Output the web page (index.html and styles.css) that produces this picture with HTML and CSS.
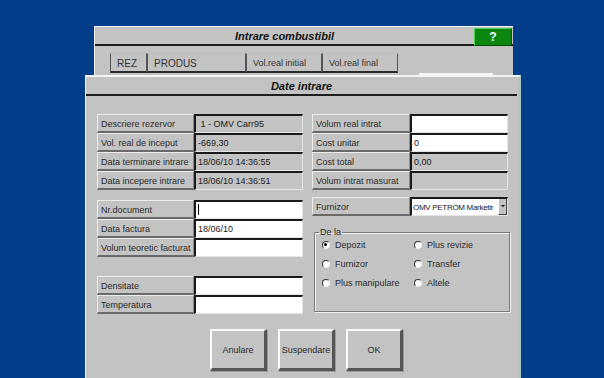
FILE: index.html
```html
<!DOCTYPE html>
<html lang="ro">
<head>
<meta charset="UTF-8">
<meta name="viewport" content="width=device-width, initial-scale=1.0">
<title>Date intrare</title>
<link rel="stylesheet" href="styles.css">
</head>
<body>
<div class="window main">
  <div class="titlebar">
    <span class="title">Intrare combustibil</span>
    <span class="help">?</span>
  </div>
  <div class="grid-head">
    <div class="hcell rez">REZ</div>
    <div class="hcell prod">PRODUS</div>
    <div class="hcell vol">Vol.real initial</div>
    <div class="hcell vol">Vol.real final</div>
  </div>
  <div class="strip"></div>
</div>

<div class="window dialog">
  <div class="titlebar">
    <span class="title">Date intrare</span>
  </div>
  <div class="content">
    <div class="col left">
      <div class="fields">
        <div class="row"><div class="label">Descriere rezervor</div><div class="value ro">&nbsp;1 - OMV Carr95</div></div>
        <div class="row"><div class="label">Vol. real de inceput</div><div class="value ro">-669,30</div></div>
        <div class="row"><div class="label">Data terminare intrare</div><div class="value ro">18/06/10 14:36:55</div></div>
        <div class="row"><div class="label">Data incepere intrare</div><div class="value ro">18/06/10 14:36:51</div></div>
      </div>
      <div class="fields doc">
        <div class="row"><div class="label">Nr.document</div><div class="value"><span class="caret"></span></div></div>
        <div class="row"><div class="label">Data factura</div><div class="value">18/06/10</div></div>
        <div class="row"><div class="label">Volum teoretic facturat</div><div class="value"></div></div>
      </div>
      <div class="fields dens">
        <div class="row"><div class="label">Densitate</div><div class="value"></div></div>
        <div class="row"><div class="label">Temperatura</div><div class="value"></div></div>
      </div>
    </div>

    <div class="col right">
      <div class="fields">
        <div class="row"><div class="label">Volum real intrat</div><div class="value"></div></div>
        <div class="row"><div class="label">Cost unitar</div><div class="value">0</div></div>
        <div class="row"><div class="label">Cost total</div><div class="value ro">0,00</div></div>
        <div class="row"><div class="label">Volum intrat masurat</div><div class="value ro"></div></div>
      </div>
      <div class="fields supplier">
        <div class="row"><div class="label">Furnizor</div>
          <div class="value select"><span class="sel-text">OMV PETROM Marketir</span><span class="arrow"></span></div>
        </div>
      </div>
      <fieldset class="group">
        <legend>De la</legend>
        <div class="radios">
          <label class="radio checked"><span class="dot"></span>Depozit</label>
          <label class="radio"><span class="dot"></span>Plus revizie</label>
          <label class="radio"><span class="dot"></span>Furnizor</label>
          <label class="radio"><span class="dot"></span>Transfer</label>
          <label class="radio"><span class="dot"></span>Plus manipulare</label>
          <label class="radio"><span class="dot"></span>Altele</label>
        </div>
      </fieldset>
    </div>
  </div>
  <div class="buttons">
    <div class="btn">Anulare</div>
    <div class="btn">Suspendare</div>
    <div class="btn">OK</div>
  </div>
</div>
</body>
</html>
```

FILE: styles.css
```css
html, body {
  margin: 0;
  height: 100%;
}
body {
  background-color: #013d88;
  font-family: "Liberation Sans", Arial, sans-serif;
  font-size: 9px;
  color: #2a2a2a;
  overflow: hidden;
  position: relative;
}
* {
  box-sizing: border-box;
}

/* windows on the desktop */
.window {
  position: absolute;
  background-color: #c3c3c3;
}
.main {
  left: 94px;
  top: 26px;
  width: 419px;
  height: 120px;
  border-top: 1px solid #f2f2f2;
  border-left: 1px solid #f2f2f2;
}
.dialog {
  left: 85px;
  top: 75px;
  width: 436px;
  height: 310px;
  border-top: 2px solid #f4f4f4;
  border-left: 1px solid #f4f4f4;
  border-right: 2px solid #a9c7b8;
}

.titlebar {
  height: 19px;
  border-bottom: 2px solid #1e1e1e;
  display: flex;
  align-items: center;
  justify-content: center;
  position: relative;
}
.main .titlebar {
  padding-right: 39px;
}
.dialog .titlebar {
  margin-right: 2px;
}
.title {
  font-size: 11px;
  font-weight: bold;
  font-style: italic;
  color: #111;
}
.help {
  position: absolute;
  right: 1px;
  top: 1px;
  width: 38px;
  height: 18px;
  background-color: #0b870f;
  border-top: 1px solid #4fcf55;
  border-left: 1px solid #4fcf55;
  border-right: 1px solid #064d09;
  border-bottom: 1px solid #064d09;
  color: #fff;
  font-size: 12px;
  font-weight: bold;
  display: flex;
  align-items: center;
  justify-content: center;
}

.grid-head {
  display: flex;
  margin: 7px 0 0 15px;
}
.hcell {
  height: 20px;
  border-left: 1px solid #555;
  border-right: 1px solid #555;
  border-top: 1px solid #bdbdbd;
  border-bottom: 2px solid #2a2a2a;
  padding: 4px 0 0 6px;
  font-size: 10px;
  color: #333;
}
.rez { width: 37px; }
.prod { width: 99px; }
.vol { width: 76px; font-size: 9px; }
.strip {
  position: absolute;
  left: 324px;
  top: 46px;
  width: 74px;
  height: 3px;
  background-color: #f4f4f4;
}

/* dialog content */
.content {
  display: flex;
  gap: 9px;
  padding: 18px 0 0 11px;
}
.col {
  display: flex;
  flex-direction: column;
}
.left { width: 206px; }
.right { width: 196px; }

.row {
  display: grid;
  grid-template-columns: 97px 1fr;
  height: 19px;
}
.right .row {
  grid-template-columns: 98px 1fr;
}
.label {
  background-color: #c3c3c3;
  border-top: 1px solid #ececec;
  border-left: 1px solid #ececec;
  border-bottom: 2px solid #6a6a6a;
  border-right: 1px solid #8a8a8a;
  padding: 4px 0 0 3px;
  white-space: nowrap;
  overflow: hidden;
}
.value {
  background-color: #fff;
  border-top: 2px solid #1a1a1a;
  border-left: 2px solid #1a1a1a;
  border-bottom: 1px solid #e4e4e4;
  border-right: 1px solid #e4e4e4;
  padding: 3px 0 0 2px;
  color: #1a1a1a;
  white-space: nowrap;
  overflow: hidden;
  position: relative;
}
.value.ro {
  background-color: #c3c3c3;
}
.caret {
  display: inline-block;
  width: 1px;
  height: 11px;
  background-color: #000;
  margin-top: -1px;
}

.doc { margin-top: 10px; }
.dens { margin-top: 19px; }
.supplier { margin-top: 7px; }

.select {
  display: flex;
  padding: 0;
  font-size: 8px;
  letter-spacing: -0.3px;
}
.sel-text {
  flex: 1;
  padding: 4px 0 0 1px;
}
.arrow {
  width: 9px;
  background-color: #c3c3c3;
  border-left: 1px solid #fff;
  border-right: 1px solid #444;
  border-bottom: 1px solid #444;
  position: relative;
}
.arrow::after {
  content: "";
  position: absolute;
  left: 2px;
  top: 6px;
  border-left: 2px solid transparent;
  border-right: 2px solid transparent;
  border-top: 2px solid #000;
}

.group {
  margin: 11px 0 0 2px;
  width: 196px;
  height: 85px;
  border: 1px solid #7c7c7c;
  box-shadow: 1px 1px 0 #f0f0f0, inset 1px 1px 0 #f0f0f0;
  padding: 4px 0 0 7px;
}
.group legend {
  padding: 0 1px;
  margin-left: -3px;
  font-size: 9px;
}
.radios {
  display: grid;
  grid-template-columns: 92px 1fr;
  row-gap: 7px;
  margin-top: -2px;
}
.radio {
  display: flex;
  align-items: center;
  gap: 5px;
  height: 12px;
  font-size: 9px;
  color: #2a2a2a;
}
.dot {
  width: 8px;
  height: 8px;
  border-radius: 50%;
  background-color: #fff;
  border-top: 1px solid #333;
  border-left: 1px solid #333;
  border-right: 1px solid #eee;
  border-bottom: 1px solid #eee;
  position: relative;
}
.checked .dot::after {
  content: "";
  position: absolute;
  left: 1px;
  top: 1px;
  width: 3px;
  height: 3px;
  border-radius: 50%;
  background-color: #000;
}

.buttons {
  display: flex;
  gap: 11px;
  margin: 15px 0 0 124px;
}
.btn {
  width: 57px;
  height: 42px;
  background-color: #c3c3c3;
  border-top: 2px solid #fafafa;
  border-left: 2px solid #fafafa;
  border-right: 3px solid #555;
  border-bottom: 3px solid #555;
  box-shadow: 1px 1px 0 #9a9a9a;
  display: flex;
  align-items: center;
  justify-content: center;
  font-size: 9px;
  color: #2a2a2a;
}
```
